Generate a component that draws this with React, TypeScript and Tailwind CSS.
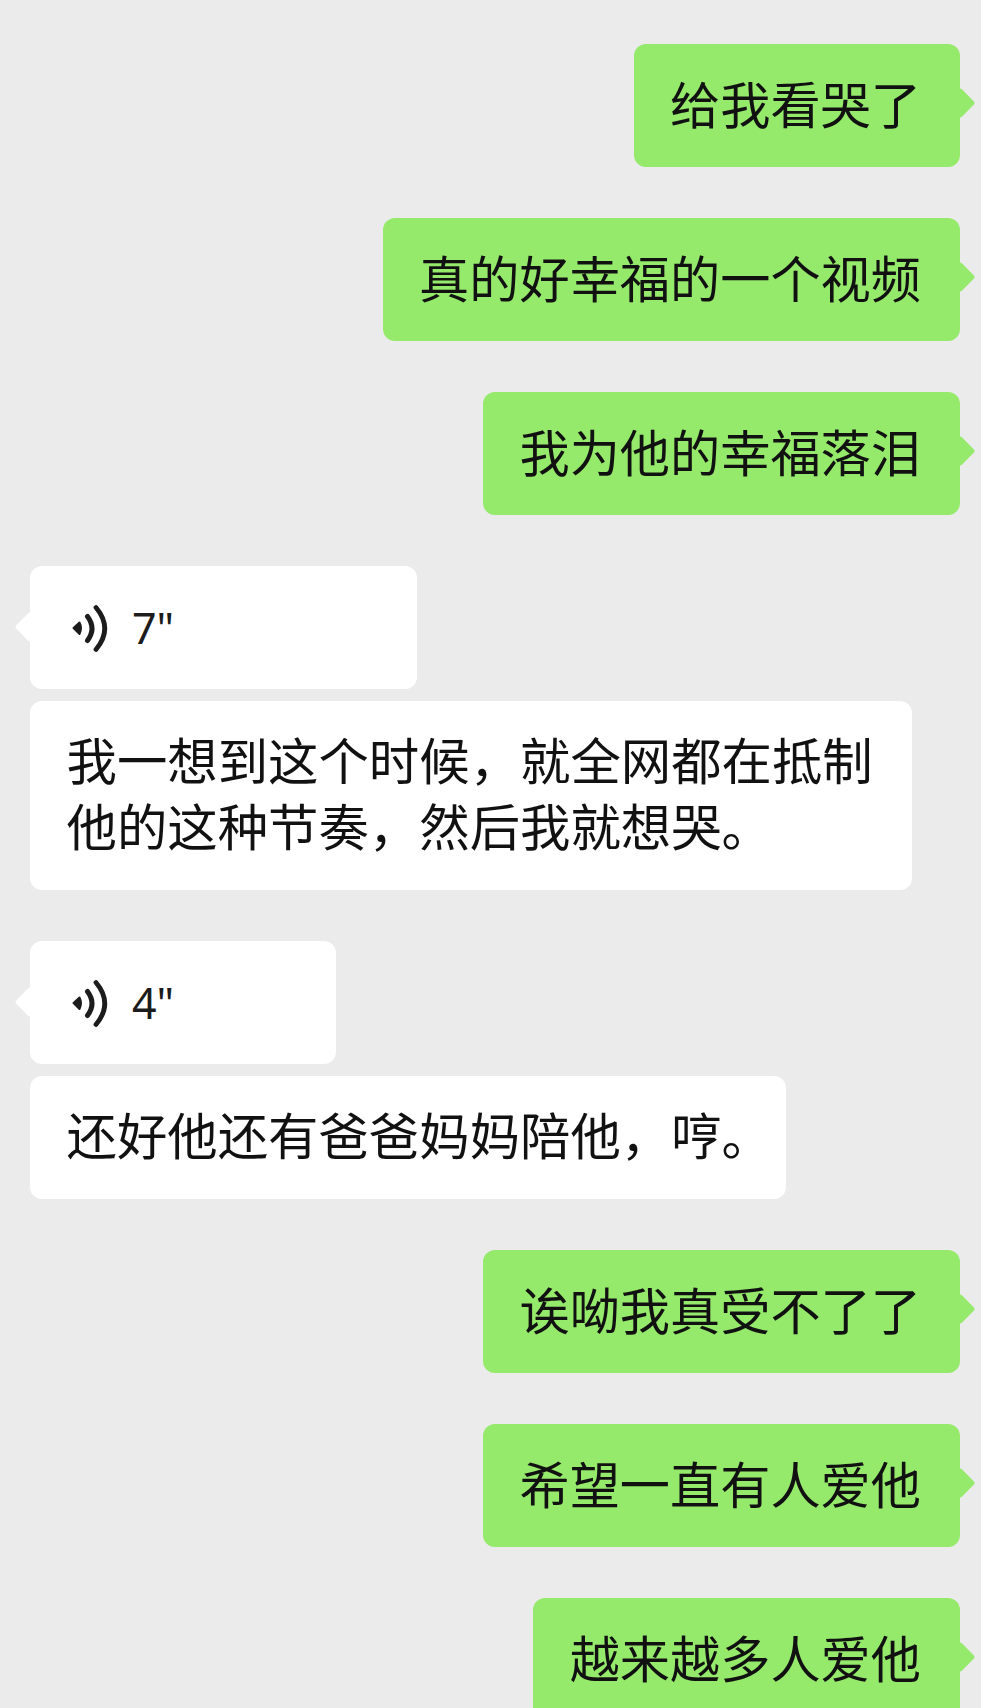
const fontStack = "font-['Noto_Sans_CJK_SC','Noto_Sans',sans-serif]";

function Tail({ side }: { side: 'left' | 'right' }) {
  return (
    <span
      className={
        side === 'right'
          ? 'absolute right-[-11px] top-[48px] h-[22px] w-[22px] rotate-45 rounded-[3px] bg-[#95e96b]'
          : 'absolute left-[-11px] top-[50px] h-[22px] w-[22px] rotate-45 rounded-[3px] bg-white'
      }
    />
  );
}

function Sent({ text }: { text: string }) {
  return (
    <div className="relative self-end rounded-[12px] bg-[#95e96b] pt-[25px] pr-[39px] pb-[32px] pl-[36.5px] text-[50.2px] leading-[66px] whitespace-nowrap text-[#111]">
      <Tail side="right" />
      <span className="relative">{text}</span>
    </div>
  );
}

function VoiceIcon() {
  return (
    <svg width="40" height="54" viewBox="0 0 40 54" fill="none" className="shrink-0">
      <path d="M3.5 27 L9.5 21.5 Q12.5 27 9.5 33 Z" fill="#1c1c1c" stroke="#1c1c1c" strokeWidth="2" strokeLinejoin="round" />
      <path d="M17.5 15.5 Q26.5 27.5 17.5 39.5" stroke="#1c1c1c" strokeWidth="5" strokeLinecap="round" />
      <path d="M26 6.5 Q43.5 27.5 26 48.5" stroke="#1c1c1c" strokeWidth="4.8" strokeLinecap="round" />
    </svg>
  );
}

function Voice({ seconds, width }: { seconds: string; width: string }) {
  return (
    <div className={`relative flex h-[123px] items-center self-start rounded-[12px] bg-white pl-[40px] ${width}`}>
      <Tail side="left" />
      <div className="relative flex items-center gap-[22px]">
        <VoiceIcon />
        <span className="font-['Noto_Sans',sans-serif] text-[43px] leading-none text-[#1c1c1c]">{seconds}</span>
      </div>
    </div>
  );
}

function Received({ text, width }: { text: string; width: string }) {
  return (
    <div className={`self-start rounded-[12px] bg-white pt-[25px] pr-[37px] pb-[32px] pl-[36.5px] text-[50.4px] leading-[66px] text-[#111] ${width}`}>
      {text}
    </div>
  );
}

export default function App() {
  return (
    <div className={`h-[1708px] w-[981px] overflow-hidden bg-[#ebebeb] pt-[44px] pr-[21px] pl-[30px] ${fontStack}`}>
      <div className="flex flex-col gap-[51px]">
        <Sent text="给我看哭了" />
        <Sent text="真的好幸福的一个视频" />
        <Sent text="我为他的幸福落泪" />
        <div className="flex flex-col gap-[12px]">
          <Voice seconds={'7"'} width="w-[387px]" />
          <Received text="我一想到这个时候，就全网都在抵制他的这种节奏，然后我就想哭。" width="w-[882px]" />
        </div>
        <div className="flex flex-col gap-[12px]">
          <Voice seconds={'4"'} width="w-[306px]" />
          <Received text="还好他还有爸爸妈妈陪他，哼。" width="w-[756px] whitespace-nowrap" />
        </div>
        <Sent text="诶呦我真受不了了" />
        <Sent text="希望一直有人爱他" />
        <Sent text="越来越多人爱他" />
      </div>
    </div>
  );
}
